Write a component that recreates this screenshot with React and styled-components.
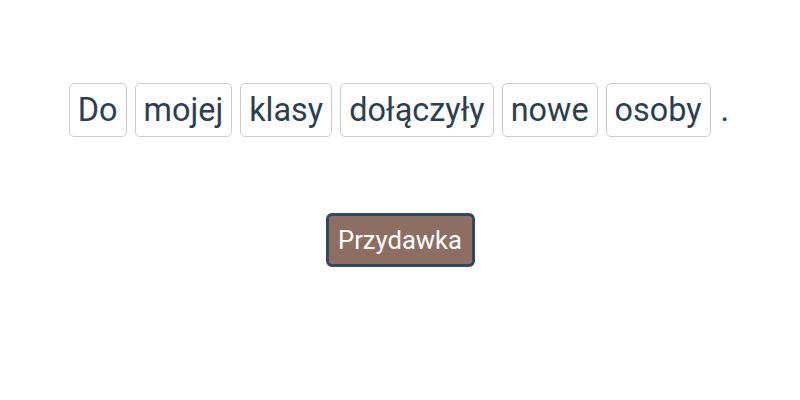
import React from "react";
import styled, { createGlobalStyle } from "styled-components";

const Global = createGlobalStyle`
  html, body { margin: 0; padding: 0; background: #fff; }
  body { font-family: Roboto, "Noto Sans", sans-serif; }
`;

const Page = styled.div`
  display: flex;
  flex-direction: column;
  align-items: center;
  padding-top: 83px;
`;

const Sentence = styled.div`
  display: flex;
  align-items: center;
  justify-content: center;
  gap: 8px;
`;

const Word = styled.span`
  display: inline-block;
  padding: 8px 8px;
  border: 1px solid #c8cdd2;
  border-radius: 5px;
  font-size: 32.4px;
  line-height: 36px;
  color: #2c3e50;
`;

const Punct = styled.span`
  font-size: 32.4px;
  line-height: 36px;
  color: #2c3e50;
  padding: 0 2px;
`;

const Button = styled.button`
  margin-top: 76px;
  width: 149px;
  height: 54px;
  background: #8d6e63;
  color: #fff;
  border: 3px solid #34495e;
  border-radius: 6px;
  font-family: Roboto, "Noto Sans", sans-serif;
  font-size: 25.6px;
  padding: 0;
  cursor: pointer;
`;

const words = ["Do", "mojej", "klasy", "dołączyły", "nowe", "osoby"];

export default function App() {
  return (
    <>
      <Global />
      <Page>
        <Sentence>
          {words.map((w) => (
            <Word key={w}>{w}</Word>
          ))}
          <Punct>.</Punct>
        </Sentence>
        <Button>Przydawka</Button>
      </Page>
    </>
  );
}
